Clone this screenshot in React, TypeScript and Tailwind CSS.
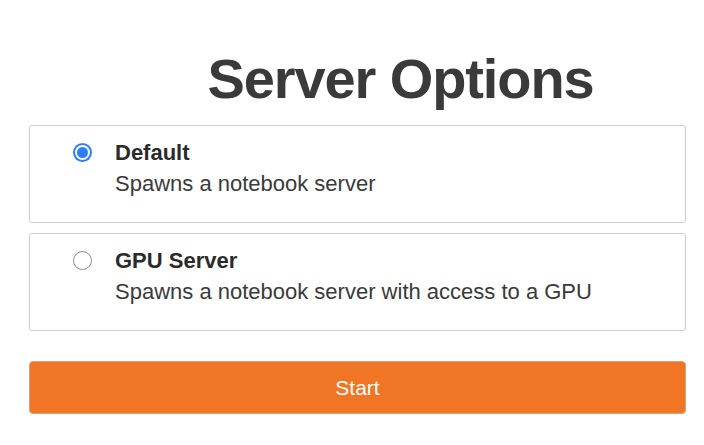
const options = [
  { id: "default", title: "Default", desc: "Spawns a notebook server", checked: true },
  { id: "gpu", title: "GPU Server", desc: "Spawns a notebook server with access to a GPU", checked: false },
];

function Radio({ checked }: { checked: boolean }) {
  if (checked) {
    return (
      <span className="flex h-[19px] w-[19px] shrink-0 items-center justify-center rounded-full bg-[#2d7ff9]">
        <span className="flex h-[15px] w-[15px] items-center justify-center rounded-full bg-white">
          <span className="h-[11px] w-[11px] rounded-full bg-[#2d7ff9]" />
        </span>
      </span>
    );
  }
  return <span className="h-[19px] w-[19px] shrink-0 rounded-full border border-[#8a8a8a] bg-white" />;
}

export default function App() {
  return (
    <div
      className="min-h-[445px] w-[704px] bg-white text-[#333]"
      style={{ fontFamily: '"Liberation Sans", Arial, Helvetica, sans-serif' }}
    >
      <div className="ml-[29px] w-[657px] pt-[48px]">
        <h1 className="pl-[86px] text-center text-[56px] font-bold leading-[62px] tracking-[-1.1px] text-[#3a3a3a]">
          Server Options
        </h1>

        <div className="mt-[15px] flex flex-col gap-[10px]">
          {options.map((o) => (
            <label
              key={o.id}
              className="flex h-[98px] gap-[23px] rounded-[3px] border border-[#cfcfcf] pl-[43px] pt-[11px]"
            >
              <div className="flex h-[31px] items-center">
                <Radio checked={o.checked} />
              </div>
              <div className="text-[22px] leading-[31px]">
                <div className="font-bold text-[#2b2b2b]">{o.title}</div>
                <div className="text-[#3a3a3a]">{o.desc}</div>
              </div>
            </label>
          ))}
        </div>

        <button className="mt-[30px] flex h-[53px] w-full items-center justify-center rounded-[4px] border border-[#d8a27c] bg-[#f07524] text-[21px] text-white">
          Start
        </button>
      </div>
    </div>
  );
}
